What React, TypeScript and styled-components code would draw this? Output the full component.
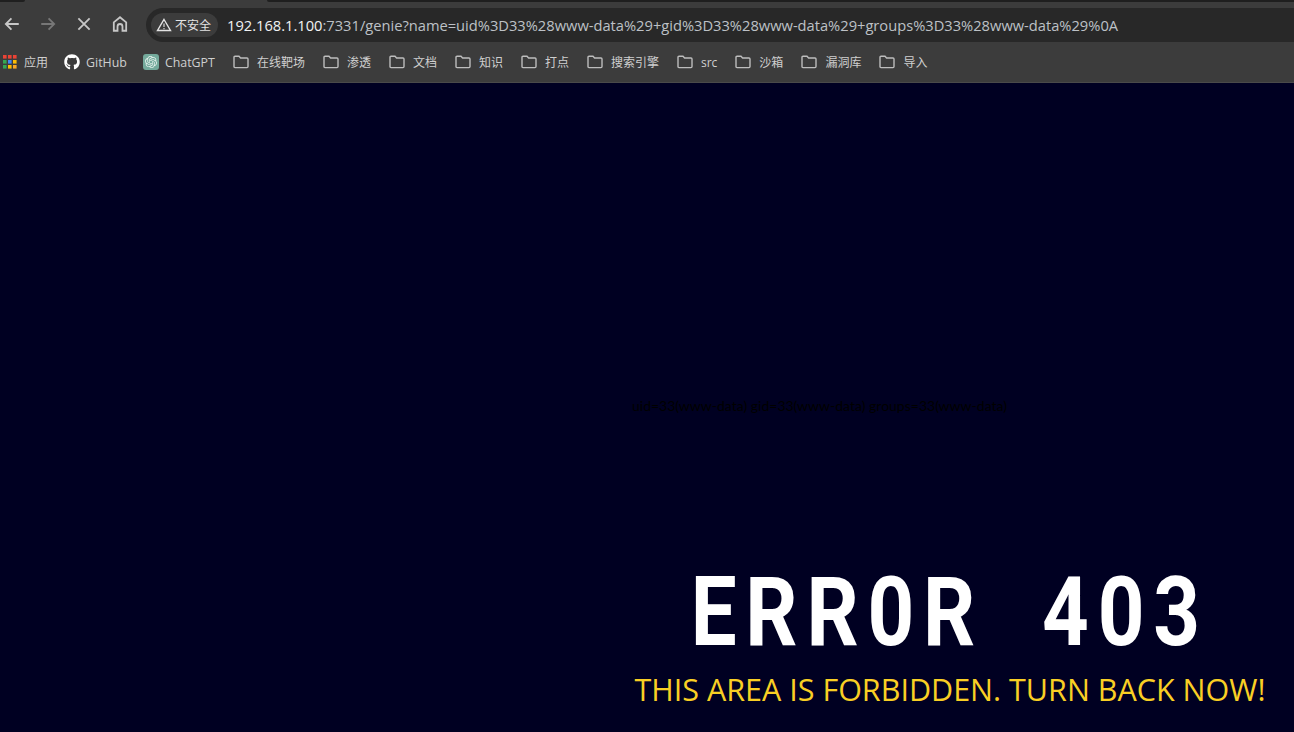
import React from 'react';
import styled, { createGlobalStyle } from 'styled-components';
import { FaGithub } from 'react-icons/fa';
import { SiOpenai } from 'react-icons/si';

const GlobalStyle = createGlobalStyle`
  html, body {
    margin: 0;
    padding: 0;
    height: 100%;
    overflow: hidden;
    background: #000022;
  }
`;

const Window = styled.div`
  width: 1294px;
  height: 732px;
  display: flex;
  flex-direction: column;
  font-family: 'Open Sans', 'Noto Sans CJK SC', sans-serif;
`;

const TabStrip = styled.div`
  height: 2px;
  background: #3c3c3c;
  display: flex;
  justify-content: space-between;
`;

const TabGap = styled.div<{ $width: number; $side: 'left' | 'right' }>`
  width: ${(p) => p.$width}px;
  background: #1f1f1f;
  border-bottom-${(p) => (p.$side === 'left' ? 'right' : 'left')}-radius: 2px;
`;

const Toolbar = styled.div`
  height: 40px;
  background: #3c3c3c;
  display: flex;
  align-items: center;
`;

const NavGroup = styled.div`
  display: flex;
  gap: 12px;
  padding-top: 4px;
`;

const NavButton = styled.div<{ $dim?: boolean }>`
  width: 24px;
  height: 34px;
  flex: none;
  display: flex;
  align-items: center;
  justify-content: center;
  color: ${(p) => (p.$dim ? '#777777' : '#c7c7c7')};
`;

const Omnibox = styled.div`
  flex: 1;
  margin: 6px 0 0 14px;
  height: 34px;
  background: #282828;
  border-radius: 17px 0 0 17px;
  display: flex;
  align-items: center;
  padding-left: 5px;
  overflow: hidden;
`;

const SecurityChip = styled.div`
  height: 24px;
  padding: 0 7px 0 5px;
  background: #3c3c3c;
  border-radius: 12px;
  display: flex;
  align-items: center;
  gap: 3px;
  color: #e3e3e3;
  font-size: 12px;
  flex: none;
`;

const Url = styled.div`
  margin-left: 9px;
  font-size: 14.68px;
  color: #bdc1c6;
  white-space: nowrap;
`;

const Host = styled.span`
  color: #f1f3f4;
`;

const BookmarksBar = styled.div`
  height: 41px;
  box-sizing: border-box;
  background: #3c3c3c;
  border-bottom: 1px solid #4a4a4a;
  display: flex;
  align-items: center;
  padding-left: 1px;
`;

const Bookmark = styled.div<{ $gap: number; $after: number }>`
  display: flex;
  align-items: center;
  gap: ${(p) => p.$gap}px;
  margin-right: ${(p) => p.$after}px;
  color: #cfcfcf;
  font-size: 12px;
  white-space: nowrap;
`;

const LatinLabel = styled.span`
  font-size: 12.4px;
`;

const ChatIcon = styled.div`
  width: 16px;
  height: 16px;
  border-radius: 3px;
  background: #74aa9c;
  color: #e8f3ef;
  display: flex;
  align-items: center;
  justify-content: center;
`;

const Page = styled.main`
  flex: 1;
  background: #000022;
  display: flex;
  flex-direction: column;
  align-items: center;
  padding-left: 606px;
`;

const Output = styled.div`
  align-self: flex-start;
  margin: 312px 0 0 26px;
  color: #000000;
  font-family: 'Lato', sans-serif;
  font-size: 14px;
  line-height: 22px;
  white-space: nowrap;
`;

const Title = styled.h1`
  margin: 147px 0 0;
  color: #ffffff;
  font-family: 'Roboto', sans-serif;
  font-size: 96px;
  line-height: 96px;
  font-weight: 700;
  letter-spacing: 10.3px;
  white-space: pre;
  transform: scaleX(0.85);
`;

const Warning = styled.p`
  margin: 9px 0 0;
  color: #f9cf24;
  font-size: 30.5px;
  line-height: 40px;
  white-space: nowrap;
`;

const Icon: React.FC<{ size?: number; children: React.ReactNode }> = ({ size = 18, children }) => (
  <svg width={size} height={size} viewBox="0 0 16 16" fill="none" stroke="currentColor" strokeWidth="1.6">
    {children}
  </svg>
);

const FolderIcon = () => (
  <svg width="16" height="16" viewBox="0 0 16 16" fill="none" stroke="#bdbdbd" strokeWidth="1.4">
    <path d="M1 3.2 Q1 2.2 2 2.2 H6 L7.6 4 H14 Q15 4 15 5 V12.6 Q15 13.6 14 13.6 H2 Q1 13.6 1 12.6 Z" />
  </svg>
);

const AppsIcon = () => {
  const colors = ['#ea4335', '#ea4335', '#ea4335', '#34a853', '#4285f4', '#fbbc04', '#34a853', '#fbbc04', '#f9a825'];
  return (
    <svg width="16" height="16" viewBox="0 0 16 16">
      {colors.map((c, i) => (
        <rect key={i} x={2 + (i % 3) * 5} y={1 + Math.floor(i / 3) * 5} width="3.6" height="3.6" fill={c} />
      ))}
    </svg>
  );
};

const folders = ['在线靶场', '渗透', '文档', '知识', '打点', '搜索引擎', 'src', '沙箱', '漏洞库', '导入'];

const App: React.FC = () => (
  <Window>
    <GlobalStyle />
    <TabStrip>
      <TabGap $width={25} $side="left" />
      <TabGap $width={1027} $side="right" />
    </TabStrip>
    <Toolbar>
      <NavGroup>
        <NavButton>
          <Icon>
            <path d="M14 8 H3 M7.5 3 L2.5 8 L7.5 13" />
          </Icon>
        </NavButton>
        <NavButton $dim>
          <Icon>
            <path d="M2 8 H13 M8.5 3 L13.5 8 L8.5 13" />
          </Icon>
        </NavButton>
        <NavButton>
          <Icon>
            <path d="M3 3 L13 13 M13 3 L3 13" />
          </Icon>
        </NavButton>
        <NavButton>
          <Icon>
            <path d="M2.5 14 V6.5 L8 2 L13.5 6.5 V14 H10.2 V10.2 A2.2 2.2 0 0 0 5.8 10.2 V14 Z" />
          </Icon>
        </NavButton>
      </NavGroup>
      <Omnibox>
        <SecurityChip>
          <svg width="16" height="16" viewBox="0 0 16 16" fill="none" stroke="#e3e3e3" strokeWidth="1.4">
            <path d="M8 2.5 L14.5 13.5 H1.5 Z" />
            <path d="M8 6.5 V10 M8 11 V12.2" strokeWidth="1.1" />
          </svg>
          不安全
        </SecurityChip>
        <Url>
          <Host>192.168.1.100</Host>:7331/genie?name=uid%3D33%28www-data%29+gid%3D33%28www-data%29+groups%3D33%28www-data%29%0A
        </Url>
      </Omnibox>
    </Toolbar>
    <BookmarksBar>
      <Bookmark $gap={7} $after={16}>
        <AppsIcon />
        应用
      </Bookmark>
      <Bookmark $gap={6} $after={16}>
        <FaGithub size={16} color="#ffffff" />
        <LatinLabel>GitHub</LatinLabel>
      </Bookmark>
      <Bookmark $gap={6} $after={18}>
        <ChatIcon>
          <SiOpenai size={12} />
        </ChatIcon>
        <LatinLabel>ChatGPT</LatinLabel>
      </Bookmark>
      {folders.map((name) => (
        <Bookmark key={name} $gap={8} $after={18}>
          <FolderIcon />
          {name}
        </Bookmark>
      ))}
    </BookmarksBar>
    <Page>
      <Output>uid=33(www-data) gid=33(www-data) groups=33(www-data)</Output>
      <Title>ERR0R  403</Title>
      <Warning>THIS AREA IS FORBIDDEN. TURN BACK NOW!</Warning>
    </Page>
  </Window>
);

export default App;
